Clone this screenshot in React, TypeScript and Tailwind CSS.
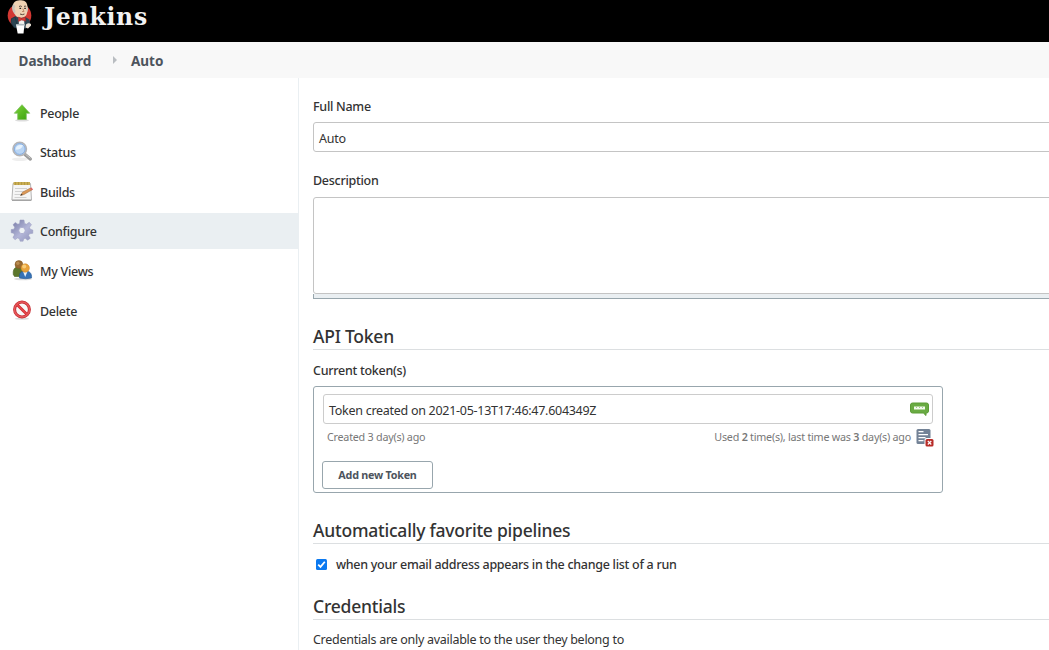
import type { ReactNode } from "react";

function JenkinsLogo() {
  return (
    <svg width="26" height="35" viewBox="0 0 26 35" className="shrink-0">
      <circle cx="12.500" cy="15.500" r="11.800" fill="#d33833" />
      <path d="M4 19.500 8.500 16l4 2.500 5-2 5 3 1 7-5 2-10-.5-4-4z" fill="#2d4552" />
      <path d="M4.500 18.500 8 17l3 11-4-.5-3-5z" fill="#2d4552" stroke="#1b2f3b" strokeWidth=".6" />
      <path d="M11.500 17.500 14 20l3-2.500.5 8h-5.500z" fill="#f3f3ef" />
      <path d="M6 5.500C6.300 1.500 10 .3 14 .3c4.700 0 6.700 3 6.500 7.500L20 13c-.4 3-2.800 4.800-5.500 4.800-3.700 0-6.700-2-7-5z" fill="#efd2b4" />
      <path d="M6.300 4c-2 2.500-1.300 6 .2 8.500l1.200 2 .8-3.500-1-2 .8-3zM20.200 6l1 3-1 3.500-.9-3z" fill="#c9c4bb" />
      <path d="M12 6.500q1.500-1 2.800 0M17 6.500q1.200-1 2.200 0M13 14q2.500 1.300 4.500 0" stroke="#57463d" strokeWidth="1" fill="none" />
      <path d="M12.500 8.300h1.600M17.300 8.300h1.500" stroke="#222" strokeWidth="1.200" />
      <path d="M15.800 8.500 17 11.500h-2" stroke="#b78263" strokeWidth=".9" fill="none" />
      <path d="m11.500 17 3 1.300 4-1.500.2 4.500-4-1.200-3.200 1.400z" fill="#d33833" stroke="#8f1d20" strokeWidth=".4" />
      <path d="M19 24.500c2-2 5.500-1.500 5 1l-3 3-2.500-1z" fill="#efe4d8" />
      <path d="M9 24.500h8.500l-1 9h-5.800z" fill="#fff" />
      <ellipse cx="13.200" cy="24.700" rx="4.200" ry=".9" fill="#aeb9be" />
    </svg>
  );
}

function PeopleIcon() {
  return (
    <svg width="24" height="24" viewBox="0 0 24 24">
      <defs>
        <linearGradient id="arrowFill" x1="0" y1="0" x2="1" y2="1">
          <stop offset="0" stopColor="#7ed43b" />
          <stop offset="1" stopColor="#37a00b" />
        </linearGradient>
      </defs>
      <ellipse cx="12" cy="19.300" rx="7" ry="1.200" fill="#ddd" />
      <path d="M12 3.700 19.700 12.200H16.300v6.300H7.700v-6.300H4.300z" fill="url(#arrowFill)" stroke="#7fc05f" strokeWidth=".8" />
    </svg>
  );
}

function StatusIcon() {
  return (
    <svg width="24" height="24" viewBox="0 0 24 24">
      <ellipse cx="10" cy="19.300" rx="8" ry="1.800" fill="#eee" />
      <path d="m15 14.500 5.300 4.500" stroke="#9b9b9b" strokeWidth="3.400" strokeLinecap="round" />
      <path d="m15.500 14.300 5 4" stroke="#c9c9c9" strokeWidth="1" />
      <circle cx="9.700" cy="9" r="6.700" fill="#b9d5f4" stroke="#b4b4b6" strokeWidth="1.600" />
      <circle cx="9.700" cy="9" r="5.400" fill="none" stroke="#81a8dc" strokeWidth=".9" />
      <path d="M5.500 9.700c.3-4 3-5.500 7.500-4.500-1 3-3.500 4.500-7.500 4.500" fill="#e6f2fd" />
    </svg>
  );
}

function BuildsIcon() {
  return (
    <svg width="24" height="24" viewBox="0 0 24 24">
      <path d="M3 3.500h17.500l1 16.500H1.900z" fill="#f5f5f5" stroke="#b5b5b5" />
      <path d="M3.500 2h16.500v3H3.500z" fill="#c9ad52" />
      <path d="M5.500 2v3m3-3v3m3-3v3m3-3v3m3-3v3" stroke="#a58c3d" strokeWidth=".6" />
      <path d="M5 8.500h12M5 11.500h10M4.500 14.500h8M4.500 17.500h12" stroke="#d0d0d0" />
      <path d="m10.500 15.500 2-3.300L20 8.200q2-.5 2.200 1.500l-8.200 4.800z" fill="#dc9856" stroke="#9b693b" strokeWidth=".5" />
      <path d="m20 8.200 1.500-.8 1.500 2-1.500 1z" fill="#dc6569" />
      <path d="m10.500 15.500 1-1.700 1.200 1.100z" fill="#333" />
      <path d="M2 20.300h19.300" stroke="#979797" />
    </svg>
  );
}

function ConfigureIcon() {
  return (
    <svg width="24" height="24" viewBox="0 0 24 24">
      <defs>
        <linearGradient id="gearFill" x1="0" y1="0" x2="1" y2="1">
          <stop offset="0" stopColor="#7478a3" />
          <stop offset=".55" stopColor="#b3b6d8" />
          <stop offset="1" stopColor="#8f92ba" />
        </linearGradient>
      </defs>
      <path
        d="M10 1h4l.5 3.400 2 .8 2.700-2 2.300 2.500-2 2.600.8 2 2.500.7v3.300l-3.400.5-.8 1.800 1.700 2.700-2.600 1.900-2.500-1.900-1.600.7-.5 2.200h-3l-.6-2.500-2-.8-2.400 1.800-2.200-2.200 1.500-2.600-.8-1.700-2.400-.4v-3.200l2.700-.4.8-2-1.700-2.500 2.300-2.200 2.600 1.700 1.700-.7z"
        fill="url(#gearFill)"
        stroke="#989bbf"
        strokeWidth=".5"
      />
      <circle cx="12" cy="11.500" r="3.200" fill="#eef2f5" stroke="#a3a5ca" strokeWidth=".8" />
    </svg>
  );
}

function ViewsIcon() {
  return (
    <svg width="24" height="24" viewBox="0 0 24 24">
      <ellipse cx="13" cy="20" rx="9" ry="1.300" fill="#ddd" />
      <path d="M3.300 15.500c-.5-5 1.200-7.500 5-7.500s6 3 5 9.500H4.500z" fill="#5b762b" stroke="#496120" strokeWidth=".6" />
      <circle cx="8.900" cy="5.500" r="3.900" fill="#986a32" stroke="#815521" strokeWidth=".5" />
      <circle cx="7.800" cy="4.300" r="1.700" fill="#b98c51" />
      <path d="M9.500 19c-.4-5 1.300-7 5.700-7s6.800 2.200 6.300 7q-6 1.500-12 0" fill="#3672b5" stroke="#245894" strokeWidth=".6" />
      <path d="m13 12.500 2.200 5.500 2.300-5.500z" fill="#e7f1fa" />
      <circle cx="15.200" cy="9" r="4.200" fill="#e8a33c" stroke="#c97e20" strokeWidth=".5" />
      <circle cx="14.200" cy="7.500" r="2" fill="#f9cd78" />
    </svg>
  );
}

function DeleteIcon() {
  return (
    <svg width="24" height="24" viewBox="0 0 24 24">
      <ellipse cx="12" cy="20.800" rx="7" ry="1" fill="#ddd" />
      <circle cx="12" cy="11.500" r="7.400" fill="#f8f8f8" stroke="#c42a30" strokeWidth="3" />
      <path d="m6.700 6.300 10.600 10.400" stroke="#cf252b" strokeWidth="2.800" />
      <circle cx="12" cy="11.500" r="7.500" fill="none" stroke="#e5585b" strokeWidth="1.600" />
      <path d="m6.700 6.300 10.600 10.400" stroke="#e5484b" strokeWidth="1.500" />
    </svg>
  );
}

function NavItem({ icon, label, active = false }: { icon: ReactNode; label: string; active?: boolean }) {
  return (
    <a className={`flex h-9 shrink-0 items-center gap-1.5 pl-2.5 ${active ? "bg-[#eaeff2]" : ""}`}>
      <span className="mt-px size-6 shrink-0">{icon}</span>
      <span className={active ? "pt-[2.5px]" : "pt-[4px]"}>{label}</span>
    </a>
  );
}

function SectionTitle({ children }: { children: string }) {
  return (
    <h2 className="h-[27px] border-b border-[#dcdfe1] text-[17.5px] leading-[26px] font-medium tracking-[-0.23px]">{children}</h2>
  );
}

export default function App() {
  return (
    <div className="flex h-[650px] w-full flex-col overflow-hidden bg-white font-['Noto_Sans',sans-serif] text-[12.5px] font-medium tracking-[-0.28px] text-[#333]">
      <header className="flex h-[42px] shrink-0 items-start gap-[11px] bg-black pl-[7px]">
        <JenkinsLogo />
        <span className="mt-[2px] font-['DejaVu_Serif',serif] text-[23.5px] leading-[30px] font-bold tracking-[0.75px] text-[#f2f2f2]">Jenkins</span>
      </header>
      <nav className="flex h-9 shrink-0 items-center bg-[#f8f8f8] pl-[18.5px] text-[13.5px] font-bold tracking-normal text-[#4d545d]">
        <span className="w-[94px] pt-[3px]">Dashboard</span>
        <svg width="4" height="8" viewBox="0 0 4 8" className="mr-[14.500px]">
          <path d="M0 0 4 4 0 8z" fill="#b9bdc1" />
        </svg>
        <span className="pt-[3px]">Auto</span>
      </nav>
      <div className="flex min-h-0 flex-1">
        <aside className="flex w-[299px] shrink-0 flex-col gap-[3.6px] border-r border-[#eaeff2] pt-[16px]">
          <NavItem icon={<PeopleIcon />} label="People" />
          <NavItem icon={<StatusIcon />} label="Status" />
          <NavItem icon={<BuildsIcon />} label="Builds" />
          <NavItem icon={<ConfigureIcon />} label="Configure" active />
          <NavItem icon={<ViewsIcon />} label="My Views" />
          <NavItem icon={<DeleteIcon />} label="Delete" />
        </aside>
        <main className="min-w-0 flex-1 overflow-hidden pl-[14px]">
          <div className="mt-[18px] h-[26px] leading-[22px]">Full Name</div>
          <div className="h-[30px] w-[800px] rounded-[3px] border border-[#c4c4c4] pl-[5px] leading-[31px] font-normal">Auto</div>
          <div className="mt-[18px] h-[27px] leading-[22px]">Description</div>
          <div className="h-[97px] w-[800px] rounded-[3px] border border-[#c4c4c4]" />
          <div className="h-[5px] w-[800px] border border-t-0 border-[#98a6ad] bg-[#eaeff2]" />
          <div className="mt-[24px]"><SectionTitle>API Token</SectionTitle></div>
          <div className="mt-[10px] h-[26px] leading-[22px]">Current token(s)</div>
          <section className="flex h-[107px] w-[630px] flex-col rounded-[3px] border border-[#98a6ad] px-[9px] pt-[7px]">
            <div className="flex h-[30px] shrink-0 items-center justify-between rounded-[3px] border border-[#ccc] pr-[3px] pl-[5px] font-normal">
              <span className="pt-[4px]">Token created on 2021-05-13T17:46:47.604349Z</span>
              <svg width="19" height="15" viewBox="0 0 19 15">
                <path d="M2.500 1h14Q18.500 1 18.500 3v6q0 2-2 2H16v2.500L13.300 11H2.500q-2 0-2-2V3q0-2 2-2" fill="#6aab43" stroke="#5c9c36" />
                <path d="M4 4.500h11v3H4z" fill="#f4faee" />
                <path d="M6 5.500h1m2 0h1m2 0h1" stroke="#a5cb8e" />
              </svg>
            </div>
            <div className="flex h-[27px] shrink-0 items-center pl-[4px] text-[10.75px] font-normal tracking-[-0.24px] text-[#777]">
              <span>Created 3 day(s) ago</span>
              <span className="ml-auto">Used <b className="font-semibold">2</b> time(s), last time was <b className="font-semibold">3</b> day(s) ago</span>
              <svg width="18" height="19" viewBox="0 0 18 19" className="-mr-px ml-[5px]">
                <rect x=".5" y="1" width="14" height="15" rx="1.500" fill="#738296" />
                <path d="M2.500 3.700h5M2.500 6.700h9.500M2.500 9.700h7M2.500 12.700h5" stroke="#fff" strokeWidth="1.200" />
                <rect x="8.500" y="10" width="9.500" height="9" rx="2" fill="#fff" />
                <rect x="9.500" y="11" width="8" height="7.500" rx="1.500" fill="#b72c28" />
                <path d="m11.800 13 3.500 3.500m0-3.500-3.500 3.500" stroke="#fff" strokeWidth="1.200" />
              </svg>
            </div>
            <button className="mt-[10px] -ml-px h-[28px] w-[111px] shrink-0 rounded-[3px] border border-[#98a6ad] text-[10.75px] font-bold tracking-[-0.23px] whitespace-nowrap text-[#4d545d]">Add new Token</button>
          </section>
          <div className="mt-[24px]"><SectionTitle>Automatically favorite pipelines</SectionTitle></div>
          <label className="mt-[11px] flex h-5 items-center gap-[9px] pl-[3px]">
            <svg width="11" height="11" viewBox="0 0 11 11" className="-mt-px">
              <rect width="11" height="11" rx="1.500" fill="#0b79f0" />
              <path d="m2.200 5.600 2.300 2.300 4.300-5.200" stroke="#fff" strokeWidth="1.700" fill="none" />
            </svg>
            <span>when your email address appears in the change list of a run</span>
          </label>
          <div className="mt-[18px]"><SectionTitle>Credentials</SectionTitle></div>
          <p className="mt-[9px] leading-[22px] font-normal">Credentials are only available to the user they belong to</p>
        </main>
      </div>
    </div>
  );
}
